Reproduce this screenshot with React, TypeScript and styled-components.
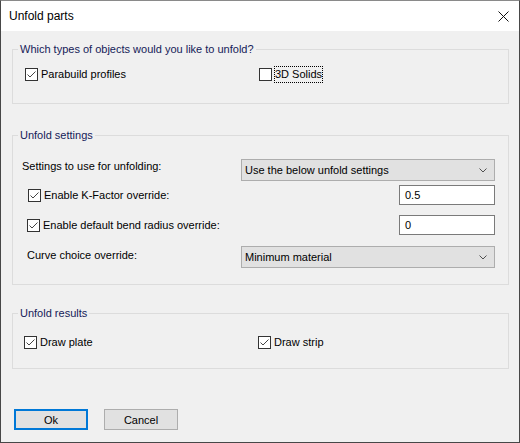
import React from "react";
import styled, { createGlobalStyle } from "styled-components";

const GlobalStyle = createGlobalStyle`
  html, body {
    margin: 0;
    padding: 0;
    background: #f0f0f0;
  }
  body {
    font-family: "Liberation Sans", Arial, sans-serif;
    font-size: 11px;
    color: #000;
  }
`;

const Window = styled.div`
  box-sizing: border-box;
  width: 520px;
  height: 443px;
  border: 1px solid #474747;
  border-top-color: #8a8a8a;
  background: #f0f0f0;
  display: flex;
  flex-direction: column;
`;

const TitleBar = styled.div`
  height: 30px;
  flex: none;
  background: #fff;
  display: flex;
  align-items: center;
  justify-content: space-between;
  padding: 0 9px 0 8px;
  font-size: 12px;
`;

const CloseButton = styled.div`
  width: 11px;
  height: 11px;
  margin-right: 1px;
  display: flex;
`;

const Body = styled.div`
  flex: 1;
  display: flex;
  flex-direction: column;
  padding: 11px 10px 0 11px;
`;

const Group = styled.fieldset<{ $gap: number; $pad: string }>`
  margin: ${(p) => p.$gap}px 0 0 0;
  padding: ${(p) => p.$pad};
  border: 1px solid #dcdcdc;
  min-inline-size: 0;
`;

const Legend = styled.legend`
  margin-left: 5px;
  padding: 0 2px 0 2px;
  line-height: 15px;
  color: #152058;
`;

const Row = styled.div<{ $h: number; $top: number }>`
  height: ${(p) => p.$h}px;
  margin-top: ${(p) => p.$top}px;
  display: flex;
  align-items: center;
`;

const Column = styled.div<{ $left: number; $width?: number }>`
  margin-left: ${(p) => p.$left}px;
  width: ${(p) => (p.$width ? `${p.$width}px` : "auto")};
  flex: ${(p) => (p.$width ? "none" : "1")};
  display: flex;
  align-items: center;
`;

const Label = styled.span<{ $lift?: number }>`
  margin-bottom: ${(p) => (p.$lift ?? 0) * 2}px;
  white-space: nowrap;
`;

const CheckRow = styled.label`
  display: flex;
  align-items: center;
  white-space: nowrap;
`;

const CheckText = styled.span<{ $focus?: boolean }>`
  margin-left: 3px;
  padding: 1px 0;
  line-height: 13px;
  outline: ${(p) => (p.$focus ? "1px dotted #000" : "none")};
`;

const Select = styled.div`
  box-sizing: border-box;
  width: 254px;
  height: 22px;
  background: #e1e1e1;
  border: 1px solid #adadad;
  display: flex;
  align-items: center;
  justify-content: space-between;
  padding: 0 7px 0 3px;
`;

const TextBox = styled.div`
  box-sizing: border-box;
  width: 96px;
  height: 20px;
  background: #fff;
  border: 1px solid #7a7a7a;
  padding: 0 5px;
  display: flex;
  align-items: center;
`;

const Footer = styled.div`
  display: flex;
  gap: 16px;
  margin-top: 40px;
  padding-left: 2px;
`;

const Button = styled.button<{ $primary?: boolean }>`
  box-sizing: border-box;
  width: 74px;
  height: 21px;
  background: #e1e1e1;
  border: ${(p) => (p.$primary ? "2px solid #0078d7" : "1px solid #adadad")};
  font-family: "Liberation Sans", Arial, sans-serif;
  font-size: 11px;
  color: #000;
  padding: 0;
`;

function CheckBox({ checked = true }: { checked?: boolean }) {
  return (
    <svg width="13" height="13" viewBox="0 0 13 13">
      <rect x="0.5" y="0.5" width="12" height="12" fill="#fff" stroke="#333" />
      {checked && (
        <polyline points="2.5,6.5 5,9 10.5,3.5" fill="none" stroke="#444" strokeWidth="1" />
      )}
    </svg>
  );
}

function Check({ text, checked, focus }: { text: string; checked?: boolean; focus?: boolean }) {
  return (
    <CheckRow>
      <CheckBox checked={checked} />
      <CheckText $focus={focus}>{text}</CheckText>
    </CheckRow>
  );
}

function Chevron() {
  return (
    <svg width="8" height="5" viewBox="0 0 8 5">
      <polyline points="0.5,0.5 4,4 7.5,0.5" fill="none" stroke="#505050" strokeWidth="1" />
    </svg>
  );
}

export default function App() {
  return (
    <>
      <GlobalStyle />
      <Window>
        <TitleBar>
          <span>Unfold parts</span>
          <CloseButton>
            <svg width="11" height="11" viewBox="0 0 11 11">
              <path d="M0.5 0.5 L10.5 10.5 M10.5 0.5 L0.5 10.5" stroke="#111" strokeWidth="1" />
            </svg>
          </CloseButton>
        </TitleBar>
        <Body>
          <Group $gap={0} $pad="0 0 19px 0">
            <Legend>Which types of objects would you like to unfold?</Legend>
            <Row $h={20} $top={7}>
              <Column $left={12} $width={234}>
                <Check text="Parabuild profiles" checked />
              </Column>
              <Column $left={0}>
                <Check text="3D Solids" checked={false} focus />
              </Column>
            </Row>
          </Group>

          <Group $gap={24} $pad="0 13px 16px 0">
            <Legend>Unfold settings</Legend>
            <Row $h={22} $top={16}>
              <Column $left={9}>
                <Label $lift={4}>Settings to use for unfolding:</Label>
              </Column>
              <Select>
                <span>Use the below unfold settings</span>
                <Chevron />
              </Select>
            </Row>
            <Row $h={20} $top={4}>
              <Column $left={15}>
                <Check text="Enable K-Factor override:" checked />
              </Column>
              <TextBox>0.5</TextBox>
            </Row>
            <Row $h={20} $top={10}>
              <Column $left={14}>
                <Check text="Enable default bend radius override:" checked />
              </Column>
              <TextBox>0</TextBox>
            </Row>
            <Row $h={22} $top={11}>
              <Column $left={14}>
                <Label $lift={2}>Curve choice override:</Label>
              </Column>
              <Select>
                <span>Minimum material</span>
                <Chevron />
              </Select>
            </Row>
          </Group>

          <Group $gap={21} $pad="0 0 16px 0">
            <Legend>Unfold results</Legend>
            <Row $h={20} $top={11}>
              <Column $left={11} $width={234}>
                <Check text="Draw plate" checked />
              </Column>
              <Column $left={0}>
                <Check text="Draw strip" checked />
              </Column>
            </Row>
          </Group>

          <Footer>
            <Button $primary>Ok</Button>
            <Button>Cancel</Button>
          </Footer>
        </Body>
      </Window>
    </>
  );
}
